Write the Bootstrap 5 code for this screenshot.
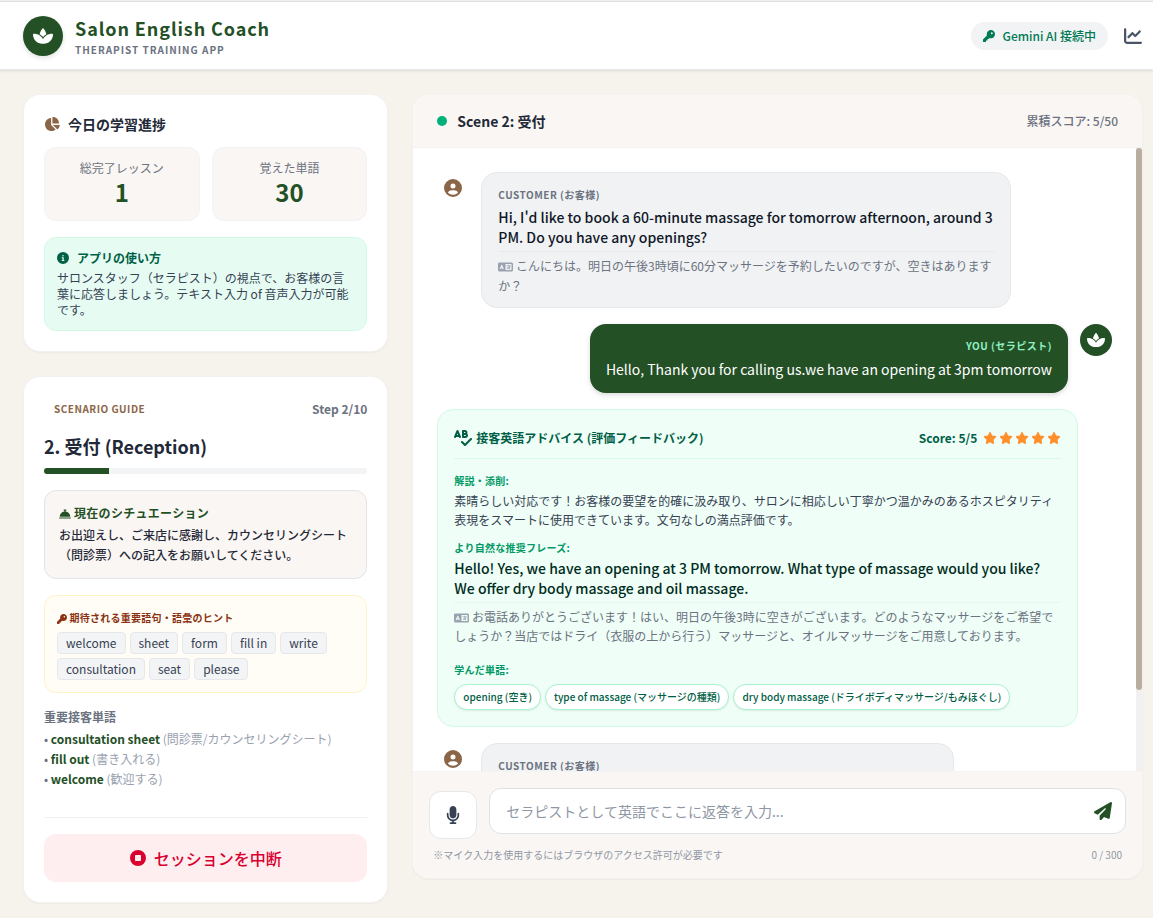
<!DOCTYPE html>
<html lang="ja">
<head>
<meta charset="utf-8">
<meta name="viewport" content="width=device-width, initial-scale=1">
<title>Salon English Coach</title>
<link rel="stylesheet" href="https://cdn.jsdelivr.net/npm/bootstrap@5.3.0/dist/css/bootstrap.min.css">
<style>
  :root { --forest: #245026; --wood: #8b6547; --shell: #faf6f3; }
  body { background: #f6f3ec; font-family: "Noto Sans CJK JP", sans-serif; font-size: 12px; line-height: 20px; color: #1f2937; }
  svg { fill: currentColor; flex: none; display: block; }
  .inline-ico { display: inline-block; vertical-align: -2px; }
  h1, h2, h3, p, ul { margin: 0; }
  .t10 { font-size: 10px; line-height: 15px; }
  .t12 { font-size: 12px; line-height: 16px; }
  .t14 { font-size: 14px; line-height: 20px; }
  .track { letter-spacing: .025em; }
  .track-wide { letter-spacing: .05em; }
  .forest { color: var(--forest); }
  .wood { color: var(--wood); }
  .gray { color: #6b7280; }
  .gray-light { color: #99a1af; }
  .slate { color: #364153; }

  .topbar { background: #fff; border-top: 1px solid #dee0e3; border-bottom: 1px solid #e5e7eb; margin-top: 1px; padding: 12px 11px 11px 23px; box-shadow: 0 1px 3px rgba(0,0,0,.1); }
  .logo { background: var(--forest); color: #fff; }
  .logo-main { width: 40px; height: 40px; box-shadow: 0 2px 5px rgba(0,0,0,.12); }
  .brand { font-size: 18px; line-height: 24px; letter-spacing: .05em; padding-top: 2px; }
  .brand-sub { font-size: 10px; line-height: 16px; letter-spacing: .1em; padding-top: 2px; }
  .status { background: #f1f3f4; color: #007a55; padding: 6px 12px; }
  .icon-btn { border: 0; background: none; padding: 0; color: #4a5565; }

  .layout { display: grid; grid-template-columns: 32.5% 1fr; gap: 26px; padding: 25px 11px 16px 24px; align-items: start; }
  .sidebar { display: grid; gap: 26px; }
  .panel { background: #fff; border-radius: 16px; box-shadow: 0 0 0 1px #f3f2f1, 0 1px 3px rgba(0,0,0,.08); }
  .panel-in { padding: 20px; }
  .panel-title { font-size: 14px; line-height: 18px; margin-bottom: 14px; }
  .stats { display: grid; grid-template-columns: 1fr 1fr; gap: 12px; }
  .stat { background: var(--shell); border: 1px solid #f1f2f4; border-radius: 12px; padding: 12px; text-align: center; }
  .stat strong { display: block; font-size: 24px; line-height: 32px; color: var(--forest); }
  .howto { background: #e6fcf3; border: 1px solid #d0fae5; border-radius: 12px; padding: 12px; }
  .howto-title { color: #006045; }
  .guide-tag { color: var(--wood); padding: 4px 10px; line-height: 16px; }
  .scene-title { font-size: 18px; line-height: 28px; margin-top: 11px; }
  .progress { --bs-progress-height: 6px; --bs-progress-bg: #f3f4f6; --bs-progress-bar-bg: var(--forest); margin-top: 8px; }
  .situation { background: var(--shell); border: 1px solid #e2e4e7; border-radius: 12px; padding: 14px 14px 13px; margin-top: 16px; }
  .hints { background: #fffdf5; border: 1px solid #fef3c6; border-radius: 12px; padding: 14px 12px 12px; margin-top: 16px; }
  .hints-title { color: #8b3214; margin-bottom: 7px; }
  .word { background: #f3f4f6; border: 1px solid #e5e7eb; border-radius: 4px; padding: 2px 8px; font-size: 12px; line-height: 16px; color: #364153; }
  .vocab { margin-top: 14px; }
  .vocab-title { font-size: 12px; line-height: 20px; margin-bottom: 2px; }
  .stop-wrap { border-top: 1px solid #f0f1f3; margin-top: 28px; padding-top: 16px; }
  .stop { background: #ffeeef; color: #d9002f; border: 0; border-radius: 12px; height: 48px; font-size: 16px; font-weight: 500; }

  .chat { height: calc(100vh - 135px); overflow: hidden; }
  .chat-head { background: var(--shell); border-bottom: 1px solid #f0f1f3; padding: 16px 24px; }
  .dot { width: 10px; height: 10px; border-radius: 50%; background: #00b17a; margin-right: 10px; }
  .log-area { min-height: 0; }
  .log { overflow-y: auto; scrollbar-width: none; padding: 24px; }
  .log::-webkit-scrollbar { display: none; }
  .rail { width: 6px; flex: none; background: #f1f1f1; }
  .rail-thumb { height: 87%; background: #b8ae9f; border-radius: 3px; }
  .avatar { width: 32px; height: 32px; flex: none; border-radius: 50%; }
  .msg { max-width: 85%; gap: 12px; }
  .bubble { border-radius: 16px; padding: 12px 16px; }
  .bubble p.t14 { padding-top: 3px; }
  .bubble-in { background: #f1f2f4; border: 1px solid #e5e7eb; padding-bottom: 11px; }
  .bubble-in p.t14 { padding-top: 2px; color: #101828; }
  .bubble-next { width: 473px; min-height: 95px; }
  .bubble-out { background: var(--forest); color: #fff; padding-bottom: 14px; box-shadow: 0 2px 5px rgba(0,0,0,.15); }
  .who { font-size: 10px; line-height: 20px; font-weight: 700; letter-spacing: .05em; }
  .bubble-out .who { color: #8ff0c5; }
  .translation { border-top: 1px solid #e7e9ec; margin-top: 4px; padding-top: 4px; }
  .feedback { width: 95%; background: #effef7; border: 1px solid #d0fae5; border-radius: 16px; padding: 16px; }
  .feedback-head { color: #005f46; border-bottom: 1px solid #d9f9ea; padding: 2px 0 10px; margin-bottom: 14px; }
  .label { font-size: 10px; line-height: 15px; font-weight: 700; color: #009966; letter-spacing: .025em; margin: 0 0 3px; }
  .label-next { margin-top: 11px; }
  .label-words { margin: 17px 0 7px; }
  .lh19 { line-height: 19px; }
  .lh20 { line-height: 20px; }
  .model { color: #002c22; font-weight: 500; }
  .feedback .translation { border-color: #e6f7ef; }
  .score { gap: 6px; }
  .stars { color: #ff8f2b; gap: 2px; }
  .pill { background: #fff; border: 1px solid #a4f4cf; border-radius: 13px; padding: 4px 8px; font-size: 10px; line-height: 16px; font-weight: 500; color: #006045; box-shadow: 0 1px 2px rgba(0,0,0,.08); white-space: nowrap; }

  .composer { background: var(--shell); border-top: 1px solid #f3f4f6; padding: 16px; }
  .composer-row { gap: 12px; }
  .mic { width: 48px; height: 48px; flex: none; background: #fff; border: 1px solid #e5e7eb; border-radius: 12px; color: #364153; margin-top: 3px; }
  .reply { height: 46px; border: 1px solid #dfe1e5; border-radius: 12px; background: #fff; padding: 0 48px 0 16px; font-size: 14px; }
  .reply::placeholder { color: #8f97a5; }
  .send { position: absolute; right: 14px; top: 14px; color: var(--forest); }
  .note { padding: 8px 4px 0; color: #8f97a5; }
</style>
</head>
<body>
<svg class="d-none" aria-hidden="true">
  <symbol id="spa" viewBox="0 0 576 512"><path d="M183.1 235.3c33.7 20.7 62.9 48.1 85.8 80.5c7 9.9 13.4 20.3 19.1 31c5.7-10.8 12.1-21.1 19.1-31c22.9-32.4 52.1-59.8 85.8-80.5C437.6 207.8 490.1 192 546 192h9.9c11.1 0 20.1 9 20.1 20.1C576 360.1 456.1 480 308.1 480H288 267.9C119.9 480 0 360.1 0 212.1C0 201 9 192 20.1 192H30c55.9 0 108.4 15.8 153.1 43.3zM301.5 37.6c15.7 16.9 61.1 71.8 84.4 164.6c-38 21.6-71.4 50.8-97.9 85.6c-26.5-34.8-59.9-63.9-97.9-85.6c23.2-92.8 68.6-147.7 84.4-164.6C278 33.9 282.9 32 288 32s10 1.9 13.5 5.6z"/></symbol>
  <symbol id="key" viewBox="0 0 512 512"><path d="M336 352c97.2 0 176-78.8 176-176S433.2 0 336 0S160 78.8 160 176c0 18.7 2.9 36.8 8.3 53.7L7 391c-4.5 4.5-7 10.6-7 17v80c0 13.3 10.7 24 24 24h80c13.3 0 24-10.7 24-24V448h40c13.3 0 24-10.7 24-24V384h40c6.4 0 12.5-2.5 17-7l33.3-33.3c16.9 5.4 35 8.3 53.7 8.3zM376 96a40 40 0 1 1 0 80 40 40 0 1 1 0-80z"/></symbol>
  <symbol id="line" viewBox="0 0 512 512"><path d="M64 64c0-17.7-14.3-32-32-32S0 46.3 0 64V400c0 44.2 35.8 80 80 80H480c17.7 0 32-14.3 32-32s-14.3-32-32-32H80c-8.8 0-16-7.2-16-16V64zm406.6 86.6c12.5-12.5 12.5-32.8 0-45.3s-32.8-12.5-45.3 0L320 210.7l-57.4-57.4c-12.5-12.5-32.8-12.5-45.3 0l-112 112c-12.5 12.5-12.5 32.8 0 45.3s32.8 12.5 45.3 0L240 221.3l57.4 57.4c12.5 12.5 32.8 12.5 45.3 0l128-128z"/></symbol>
  <symbol id="pie" viewBox="0 0 576 512"><path d="M304 240V16.6c0-9 7-16.6 16-16.6C443.7 0 544 100.3 544 224c0 9-7.6 16-16.6 16H304zM32 272C32 150.7 122.1 50.3 239 34.3c9.2-1.3 17 6.1 17 15.4V288L412.5 444.5c6.7 6.7 6.2 17.7-1.5 23.1C371.8 495.6 323.8 512 272 512C139.5 512 32 404.6 32 272zm526.4 16c9.3 0 16.6 7.8 15.4 17c-7.7 55.9-34.6 105.6-73.9 142.3c-6 5.6-15.4 5.2-21.2-.7L320 288H558.4z"/></symbol>
  <symbol id="info" viewBox="0 0 512 512"><path d="M256 512A256 256 0 1 0 256 0a256 256 0 1 0 0 512zM216 336h24V272H216c-13.3 0-24-10.7-24-24s10.7-24 24-24h48c13.3 0 24 10.7 24 24v88h8c13.3 0 24 10.7 24 24s-10.7 24-24 24H216c-13.3 0-24-10.7-24-24s10.7-24 24-24zm40-208a32 32 0 1 1 0 64 32 32 0 1 1 0-64z"/></symbol>
  <symbol id="bell" viewBox="0 0 512 512"><path d="M216 64c-13.3 0-24 10.7-24 24s10.7 24 24 24h16v33.3C119.6 157.2 32 252.4 32 368H480c0-115.6-87.6-210.8-200-222.7V112h16c13.3 0 24-10.7 24-24s-10.7-24-24-24H256 216zM24 400c-13.3 0-24 10.7-24 24s10.7 24 24 24H488c13.3 0 24-10.7 24-24s-10.7-24-24-24H24z"/></symbol>
  <symbol id="stop" viewBox="0 0 512 512"><path fill-rule="evenodd" d="M256 512A256 256 0 1 0 256 0a256 256 0 1 0 0 512zM192 160H320c17.7 0 32 14.3 32 32V320c0 17.7-14.3 32-32 32H192c-17.7 0-32-14.3-32-32V192c0-17.7 14.3-32 32-32z"/></symbol>
  <symbol id="user" viewBox="0 0 512 512"><path d="M399 384.2C376.9 345.8 335.4 320 288 320H224c-47.4 0-88.9 25.8-111 64.2c35.2 39.2 86.2 63.8 143 63.8s107.8-24.7 143-63.8zM0 256a256 256 0 1 1 512 0A256 256 0 1 1 0 256zm256 16a72 72 0 1 0 0-144 72 72 0 1 0 0 144z"/></symbol>
  <symbol id="lang" viewBox="0 0 640 512"><path d="M0 128C0 92.7 28.7 64 64 64H256h48 16H576c35.3 0 64 28.7 64 64V384c0 35.3-28.7 64-64 64H320 304 256 64c-35.3 0-64-28.7-64-64V128zm320 0V384H576V128H320zM178.3 175.9c-3.2-7.2-10.4-11.9-18.3-11.9s-15.1 4.7-18.3 11.9l-64 144c-4.5 10.1 .1 21.9 10.2 26.4s21.9-.1 26.4-10.2l8.9-20.1h73.6l8.9 20.1c4.5 10.1 16.3 14.6 26.4 10.2s14.6-16.3 10.2-26.4l-64-144zM160 233.2L179 276H141l19-42.8zM448 164c11 0 20 9 20 20v4h44 16c11 0 20 9 20 20s-9 20-20 20h-2l-1.6 4.5c-8.9 24.4-22.4 46.6-39.6 65.4c.9 .6 1.8 1.1 2.7 1.6l18.9 11.3c9.5 5.7 12.5 18 6.9 27.4s-18 12.5-27.4 6.9l-18.9-11.3c-4.5-2.7-8.8-5.5-13.1-8.5c-10.6 7.5-21.9 14-34 19.4l-3.6 1.6c-10.1 4.5-21.9-.1-26.4-10.2s.1-21.9 10.2-26.4l3.6-1.6c6.4-2.9 12.6-6.1 18.5-9.8l-12.2-12.2c-7.8-7.8-7.8-20.5 0-28.3s20.5-7.8 28.3 0l14.6 14.6 .5 .5c12.4-13.1 22.5-28.3 29.8-45H448 376c-11 0-20-9-20-20s9-20 20-20h52v-4c0-11 9-20 20-20z"/></symbol>
  <symbol id="spell" viewBox="0 0 576 512"><path d="M112 0C99.1 0 87.4 7.8 82.5 19.7l-66.7 160-13.3 32c-6.8 16.3 .9 35 17.2 41.8s35-.9 41.8-17.2L66.7 224h90.7l5.1 12.3c6.8 16.3 25.5 24 41.8 17.2s24-25.5 17.2-41.8l-13.3-32-66.7-160C136.6 7.8 124.9 0 112 0zm18.7 160H93.3L112 115.2 130.7 160zM256 32v96 96c0 17.7 14.3 32 32 32h80c44.2 0 80-35.8 80-80c0-23.1-9.8-43.8-25.4-58.4c6-11.2 9.4-24 9.4-37.6c0-44.2-35.8-80-80-80H288c-17.7 0-32 14.3-32 32zm96 64H320V64h32c8.8 0 16 7.2 16 16s-7.2 16-16 16zm-32 64h32 16c8.8 0 16 7.2 16 16s-7.2 16-16 16H320V160zM566.6 310.6c12.5-12.5 12.5-32.8 0-45.3s-32.8-12.5-45.3 0L352 434.7l-73.4-73.4c-12.5-12.5-32.8-12.5-45.3 0s-12.5 32.8 0 45.3l96 96c12.5 12.5 32.8 12.5 45.3 0l192-192z"/></symbol>
  <symbol id="star" viewBox="0 0 576 512"><path d="M316.9 18C311.6 7 300.4 0 288.1 0s-23.4 7-28.8 18L195 150.3 51.4 171.5c-12 1.8-22 10.2-25.7 21.7s-.7 24.2 7.9 32.7L137.8 329 113.2 474.7c-2 12 3 24.2 12.9 31.3s23 8 33.8 2.3l128.3-68.5 128.3 68.5c10.8 5.7 23.9 4.9 33.8-2.3s14.9-19.3 12.9-31.3L438.5 329 542.7 225.9c8.6-8.5 11.7-21.2 7.9-32.7s-13.7-19.9-25.7-21.7L381.2 150.3 316.9 18z"/></symbol>
  <symbol id="mic" viewBox="0 0 384 512"><path d="M192 0C139 0 96 43 96 96V256c0 53 43 96 96 96s96-43 96-96V96c0-53-43-96-96-96zM64 216c0-13.3-10.7-24-24-24s-24 10.7-24 24v40c0 89.1 66.2 162.7 152 174.4V464H120c-13.3 0-24 10.7-24 24s10.7 24 24 24h72 72c13.3 0 24-10.7 24-24s-10.7-24-24-24H216V430.4c85.8-11.7 152-85.3 152-174.4V216c0-13.3-10.7-24-24-24s-24 10.7-24 24v40c0 70.7-57.3 128-128 128s-128-57.3-128-128V216z"/></symbol>
  <symbol id="plane" viewBox="0 0 512 512"><path d="M498.1 5.6c10.1 7 15.4 19.1 13.5 31.2l-64 416c-1.5 9.7-7.4 18.2-16 23s-18.9 5.4-28 1.6L284 427.7l-68.5 74.1c-8.9 9.7-22.9 12.9-35.2 8.1S160 493.2 160 480V396.4c0-4 1.5-7.8 4.2-10.7L331.8 202.8c5.8-6.3 5.6-16-.4-22s-15.7-6.4-22-.7L106 360.8 17.7 316.6C7.1 311.3 .3 300.7 0 288.9s5.9-22.8 16.1-28.7l448-256c10.7-6.1 23.9-5.5 34 1.4z"/></symbol>
</svg>

<header class="topbar d-flex align-items-center justify-content-between">
  <div class="d-flex align-items-center">
    <span class="logo logo-main rounded-circle d-flex align-items-center justify-content-center me-2" aria-hidden="true"><svg width="20" height="18"><use href="#spa"/></svg></span>
    <div class="ps-1">
      <h1 class="brand fw-bold forest">Salon English Coach</h1>
      <p class="brand-sub fw-bold gray">THERAPIST TRAINING APP</p>
    </div>
  </div>
  <div class="d-flex align-items-center gap-3">
    <span class="status rounded-pill d-flex align-items-center gap-2 t12 fw-medium"><svg width="12" height="12"><use href="#key"/></svg><span>Gemini AI 接続中</span></span>
    <button type="button" class="icon-btn" aria-label="Progress"><svg width="18" height="18"><use href="#line"/></svg></button>
  </div>
</header>

<main class="layout">
  <div class="sidebar">
    <section class="panel panel-in">
      <h2 class="panel-title fw-bold d-flex align-items-center gap-2"><svg class="wood" width="16" height="14"><use href="#pie"/></svg><span>今日の学習進捗</span></h2>
      <div class="stats">
        <div class="stat t12 gray">総完了レッスン<strong>1</strong></div>
        <div class="stat t12 gray">覚えた単語<strong>30</strong></div>
      </div>
      <div class="howto mt-3 t12 slate">
        <h3 class="howto-title t12 fw-bold mb-1 d-flex align-items-center gap-2"><svg width="12" height="12"><use href="#info"/></svg><span>アプリの使い方</span></h3>
        <p>サロンスタッフ（セラピスト）の視点で、お客様の言葉に応答しましょう。テキスト入力 of 音声入力が可能です。</p>
      </div>
    </section>

    <section class="panel panel-in">
      <div class="d-flex align-items-center justify-content-between">
        <span class="t10 guide-tag fw-bold track-wide">SCENARIO GUIDE</span>
        <span class="t12 fw-bold gray">Step 2/10</span>
      </div>
      <h2 class="scene-title fw-bold">2. 受付 (Reception)</h2>
      <div class="progress" role="progressbar" aria-label="Step" aria-valuenow="20" aria-valuemin="0" aria-valuemax="100"><div class="progress-bar" style="width:20%"></div></div>
      <div class="situation">
        <h3 class="t12 fw-bold forest track mb-1"><svg class="inline-ico" width="12" height="12"><use href="#bell"/></svg> 現在のシチュエーション</h3>
        <p class="fw-medium">お出迎えし、ご来店に感謝し、カウンセリングシート（問診票）への記入をお願いしてください。</p>
      </div>
      <div class="hints">
        <h3 class="hints-title t10 fw-bold track"><svg class="inline-ico" width="10" height="10"><use href="#key"/></svg> 期待される重要語句・語彙のヒント</h3>
        <div class="d-flex flex-wrap gap-1">
          <span class="word">welcome</span><span class="word">sheet</span><span class="word">form</span><span class="word">fill in</span><span class="word">write</span><span class="word">consultation</span><span class="word">seat</span><span class="word">please</span>
        </div>
      </div>
      <div class="vocab gray">
        <h3 class="vocab-title fw-bold">重要接客単語</h3>
        <ul class="list-unstyled">
          <li>• <strong class="forest">consultation sheet</strong> <span class="gray-light">(問診票/カウンセリングシート)</span></li>
          <li>• <strong class="forest">fill out</strong> <span class="gray-light">(書き入れる)</span></li>
          <li>• <strong class="forest">welcome</strong> <span class="gray-light">(歓迎する)</span></li>
        </ul>
      </div>
      <div class="stop-wrap">
        <button type="button" class="stop w-100 d-flex align-items-center justify-content-center gap-2"><svg width="16" height="16"><use href="#stop"/></svg><span>セッションを中断</span></button>
      </div>
    </section>
  </div>

  <section class="panel chat d-flex flex-column">
    <div class="chat-head d-flex align-items-center justify-content-between">
      <h2 class="t14 fw-bold d-flex align-items-center"><span class="dot"></span><span>Scene 2: 受付</span></h2>
      <span class="t12 fw-medium gray">累積スコア: 5/50</span>
    </div>
    <div class="log-area flex-grow-1 d-flex">
      <div class="log flex-grow-1 d-flex flex-column gap-3" tabindex="0">
        <article class="msg d-flex flex-shrink-0 align-self-start">
          <span class="avatar wood d-flex align-items-center justify-content-center"><svg width="18" height="18"><use href="#user"/></svg></span>
          <div class="bubble bubble-in">
            <div class="who gray">CUSTOMER (お客様)</div>
            <p class="t14 fw-medium">Hi, I'd like to book a 60-minute massage for tomorrow afternoon, around 3 PM. Do you have any openings?</p>
            <p class="translation gray"><svg class="inline-ico gray-light" width="15" height="12"><use href="#lang"/></svg> こんにちは。明日の午後3時頃に60分マッサージを予約したいのですが、空きはありますか？</p>
          </div>
        </article>
        <article class="msg d-flex flex-shrink-0 align-self-end">
          <div class="bubble bubble-out">
            <div class="who text-end">YOU (セラピスト)</div>
            <p class="t14">Hello, Thank you for calling us.we have an opening at 3pm tomorrow</p>
          </div>
          <span class="avatar logo d-flex align-items-center justify-content-center"><svg width="18" height="16"><use href="#spa"/></svg></span>
        </article>
        <article class="feedback flex-shrink-0">
          <div class="feedback-head d-flex align-items-center justify-content-between t12 fw-bold">
            <h3 class="t12 lh20 fw-bold d-flex align-items-center"><svg class="me-1" width="18" height="16"><use href="#spell"/></svg><span>接客英語アドバイス (評価フィードバック)</span></h3>
            <div class="score d-flex align-items-center"><span>Score: 5/5</span><span class="stars d-flex" role="img" aria-label="5"><svg width="14" height="12"><use href="#star"/></svg><svg width="14" height="12"><use href="#star"/></svg><svg width="14" height="12"><use href="#star"/></svg><svg width="14" height="12"><use href="#star"/></svg><svg width="14" height="12"><use href="#star"/></svg></span></div>
          </div>
          <h4 class="label">解説・添削:</h4>
          <p class="lh19 slate">素晴らしい対応です！お客様の要望を的確に汲み取り、サロンに相応しい丁寧かつ温かみのあるホスピタリティ表現をスマートに使用できています。文句なしの満点評価です。</p>
          <h4 class="label label-next">より自然な推奨フレーズ:</h4>
          <p class="t14 model">Hello! Yes, we have an opening at 3 PM tomorrow. What type of massage would you like? We offer dry body massage and oil massage.</p>
          <p class="translation lh19 gray"><svg class="inline-ico gray-light" width="15" height="12"><use href="#lang"/></svg> お電話ありがとうございます！はい、明日の午後3時に空きがございます。どのようなマッサージをご希望でしょうか？当店ではドライ（衣服の上から行う）マッサージと、オイルマッサージをご用意しております。</p>
          <h4 class="label label-words">学んだ単語:</h4>
          <div class="d-flex flex-wrap gap-1">
            <span class="pill">opening (空き)</span><span class="pill">type of massage (マッサージの種類)</span><span class="pill">dry body massage (ドライボディマッサージ/もみほぐし)</span>
          </div>
        </article>
        <article class="msg d-flex flex-shrink-0 align-self-start">
          <span class="avatar wood d-flex align-items-center justify-content-center"><svg width="18" height="18"><use href="#user"/></svg></span>
          <div class="bubble bubble-in bubble-next"><div class="who gray">CUSTOMER (お客様)</div></div>
        </article>
      </div>
      <div class="rail" aria-hidden="true"><div class="rail-thumb"></div></div>
    </div>
    <form class="composer" onsubmit="return false">
      <div class="composer-row d-flex">
        <button type="button" class="mic d-flex align-items-center justify-content-center" aria-label="Microphone"><svg width="14" height="18"><use href="#mic"/></svg></button>
        <div class="position-relative flex-grow-1">
          <input id="reply" class="reply w-100" type="text" maxlength="300" aria-label="セラピストとして英語でここに返答を入力..." placeholder="セラピストとして英語でここに返答を入力...">
          <button type="submit" class="icon-btn send" aria-label="Send"><svg width="18" height="18"><use href="#plane"/></svg></button>
        </div>
      </div>
      <div class="note t10 d-flex justify-content-between"><span>※マイク入力を使用するにはブラウザのアクセス許可が必要です</span><span>0 / 300</span></div>
    </form>
  </section>
</main>
<script src="https://cdn.jsdelivr.net/npm/bootstrap@5.3.0/dist/js/bootstrap.bundle.min.js"></script>
</body>
</html>
